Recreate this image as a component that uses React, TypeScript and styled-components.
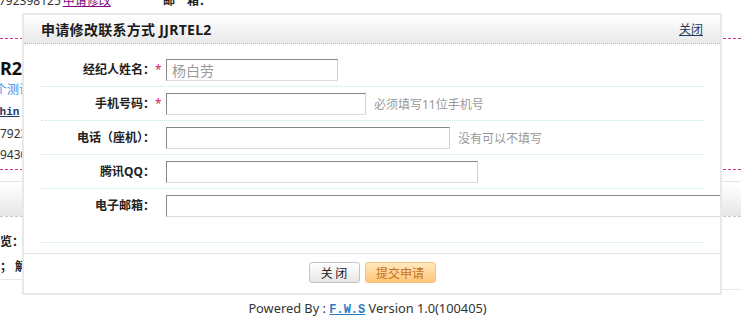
import styled, { createGlobalStyle } from "styled-components";

const GlobalStyle = createGlobalStyle`
  html, body {
    margin: 0;
    padding: 0;
    background: #ffffff;
  }
  body {
    font-family: "Noto Sans", "Noto Sans CJK SC", sans-serif;
    font-size: 12px;
    color: #333333;
    overflow: hidden;
  }
`;

const Page = styled.div`
  position: relative;
  width: 741px;
  height: 323px;
  overflow: hidden;
`;

/* ---------- page behind the dialog ---------- */

const TopLine = styled.div`
  display: flex;
  margin: -8px 0 0 -1px;
  line-height: 18px;
`;

const Phone = styled.span`
  width: 164px;
`;

const VisitedLink = styled.a`
  color: #800080;
  text-decoration: underline;
  margin-left: 2px;
`;

const FieldName = styled.span`
  font-weight: bold;
  color: #222222;
`;

const Dashed = styled.div<{ $top: number }>`
  margin-top: ${(p) => p.$top}px;
  border-top: 1px dashed #cc3399;
`;

const Profile = styled.div`
  padding: 18px 0 4px;
`;

const ProfileName = styled.div`
  font-size: 18px;
  font-weight: bold;
  line-height: 22px;
  color: #111111;
`;

const ProfileLine = styled.div<{ $shift?: number }>`
  line-height: 21px;
  margin-left: ${(p) => p.$shift || 0}px;
`;

const Tagline = styled(ProfileLine)`
  color: #3a8ee6;
`;

const UserLink = styled.a`
  font-family: "Liberation Mono", monospace;
  font-weight: bold;
  font-size: 11px;
  color: #1e3a5f;
  text-decoration: underline;
`;

const TabBox = styled.div`
  margin-top: 11px;
  border-top: 1px solid #e5e5e5;
  padding-top: 2px;
`;

const TabBar = styled.div`
  height: 32px;
  background: linear-gradient(#ffffff, #e6e6e6);
  border-bottom: 1px dashed #c8c8c8;
`;

const InfoSection = styled.div`
  display: grid;
  grid-template-columns: 1fr 120px;
`;

const InfoTable = styled.div`
  padding-top: 12px;
  border-bottom: 1px solid #e8e8e8;
  align-self: start;
`;

const InfoRow = styled.div<{ $shift: number }>`
  line-height: 25px;
  margin-left: ${(p) => p.$shift}px;
  font-weight: bold;
  color: #222222;
`;

const SideCell = styled.div`
  height: 72px;
  border-bottom: 1px solid #e8e8e8;
`;

const PoweredBy = styled.div`
  margin-top: 9px;
  text-align: center;
  font-size: 12.8px;
  line-height: 18px;
  color: #333333;
  padding-right: 6px;
`;

const BrandLink = styled.a`
  font-family: "Liberation Mono", monospace;
  font-weight: bold;
  font-size: 12px;
  color: #2b7bc0;
  text-decoration: underline;
`;

/* ---------- dialog ---------- */

const Dialog = styled.div`
  position: absolute;
  left: 22px;
  top: 13px;
  width: 700px;
  height: 282px;
  box-sizing: border-box;
  border: 2px solid #e8e8e8;
  background: #ffffff;
  overflow: hidden;
  display: flex;
  flex-direction: column;
`;

const Header = styled.div`
  height: 28px;
  display: flex;
  align-items: center;
  justify-content: space-between;
  padding: 0 17px;
  background: linear-gradient(#ffffff, #e9e9e9);
  border-bottom: 1px dotted #b5b5b5;
`;

const Title = styled.h3`
  margin: 0;
  font-size: 14px;
  font-weight: bold;
  color: #1a1a1a;
  letter-spacing: 0.3px;
`;

const CloseLink = styled.a`
  font-size: 12px;
  color: #1e3a5f;
  text-decoration: underline;
`;

const Body = styled.div`
  padding: 9px 17px 10px;
`;

const Row = styled.div<{ $extra?: number }>`
  display: grid;
  grid-template-columns: 114px 11px 1fr;
  align-items: start;
  padding: 6px 0 ${(p) => 5 + (p.$extra || 0)}px;
  border-bottom: 1px dotted #cfe0e3;
`;

const Label = styled.label`
  text-align: right;
  font-weight: bold;
  color: #222222;
  line-height: 22px;
`;

const Star = styled.span`
  color: #d3245f;
  line-height: 22px;
`;

const Field = styled.div`
  display: flex;
  align-items: center;
  gap: 8px;
  white-space: nowrap;
`;

const TextInput = styled.input<{ $w: number }>`
  width: ${(p) => p.$w}px;
  height: 22px;
  box-sizing: border-box;
  flex: none;
  padding: 0 5px;
  border: 1px solid;
  border-color: #858585 #d0d0d0 #dcdcdc #858585;
  font-family: "Noto Sans CJK SC", sans-serif;
  font-size: 14px;
  color: #999999;
  background: #ffffff;
  outline: none;
`;

const Hint = styled.span`
  color: #999999;
  font-size: 12px;
`;

const Footer = styled.div`
  flex: 1;
  border-top: 1px solid #e5e5e5;
  display: flex;
  justify-content: center;
  gap: 5px;
  padding-top: 8px;
`;

const Button = styled.button<{ $primary?: boolean; $w: number }>`
  width: ${(p) => p.$w}px;
  height: 21px;
  padding: 0;
  border-radius: 3px;
  font-family: "Noto Sans CJK SC", sans-serif;
  font-size: 12px;
  cursor: pointer;
  border: 1px solid ${(p) => (p.$primary ? "#f3c27e" : "#c4c4c4")};
  color: ${(p) => (p.$primary ? "#c5721c" : "#222222")};
  background: ${(p) =>
    p.$primary
      ? "linear-gradient(#ffe8c0, #ffc675)"
      : "linear-gradient(#ffffff, #e6e6e6)"};
`;

const fields = [
  { label: "经纪人姓名：", req: true, w: 172, value: "杨白劳", hint: "" },
  { label: "手机号码：", req: true, w: 200, value: "", hint: "必须填写11位手机号" },
  { label: "电话（座机）：", req: false, w: 284, value: "", hint: "没有可以不填写" },
  { label: "腾讯QQ：", req: false, w: 312, value: "", hint: "" },
  { label: "电子邮箱：", req: false, w: 600, value: "", hint: "", extra: 20 },
];

export default function App() {
  return (
    <Page>
      <GlobalStyle />
      <TopLine>
        <Phone>
          792398125<VisitedLink>申请修改</VisitedLink>
        </Phone>
        <FieldName>邮　箱：</FieldName>
      </TopLine>
      <Dashed $top={28} />
      <Profile>
        <ProfileName>R23</ProfileName>
        <Tagline $shift={-5}>个测试</Tagline>
        <ProfileLine $shift={-7}>
          <UserLink>zhin</UserLink>
        </ProfileLine>
        <ProfileLine>79239812</ProfileLine>
        <ProfileLine>94302615</ProfileLine>
      </Profile>
      <Dashed $top={0} />
      <TabBox>
        <TabBar />
      </TabBox>
      <InfoSection>
        <InfoTable>
          <InfoRow $shift={-12}>浏览：</InfoRow>
          <InfoRow $shift={0}>；&nbsp;解</InfoRow>
        </InfoTable>
        <SideCell />
      </InfoSection>
      <PoweredBy>
        Powered By : <BrandLink>F.W.S</BrandLink> Version 1.0(100405)
      </PoweredBy>

      <Dialog>
        <Header>
          <Title>申请修改联系方式 JJRTEL2</Title>
          <CloseLink>关闭</CloseLink>
        </Header>
        <Body>
          {fields.map((f) => (
            <Row key={f.label} $extra={f.extra}>
              <Label>{f.label}</Label>
              <Star>{f.req ? "*" : ""}</Star>
              <Field>
                <TextInput $w={f.w} defaultValue={f.value} readOnly={!!f.value} />
                {f.hint && <Hint>{f.hint}</Hint>}
              </Field>
            </Row>
          ))}
        </Body>
        <Footer>
          <Button $w={51}>关 闭</Button>
          <Button $w={71} $primary>
            提交申请
          </Button>
        </Footer>
      </Dialog>
    </Page>
  );
}
